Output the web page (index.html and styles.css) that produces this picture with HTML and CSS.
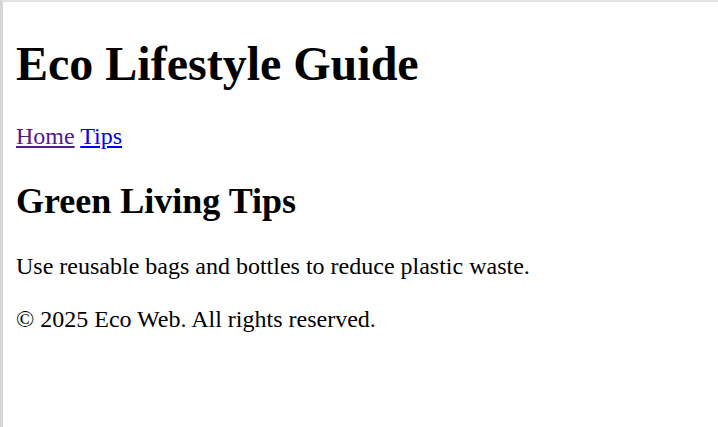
FILE: index.html
```html
<!DOCTYPE html>
<html lang="en">
<head>
<meta charset="utf-8">
<title>Eco Lifestyle Guide</title>
<link rel="stylesheet" href="styles.css">
</head>
<body>
<div class="frame">
  <header>
    <h1 class="title">Eco Lifestyle Guide</h1>
    <nav class="nav"><a class="link visited" href="#">Home</a> <a class="link" href="#tips">Tips</a></nav>
  </header>
  <main>
    <h2 class="subtitle">Green Living Tips</h2>
    <p class="text">Use reusable bags and bottles to reduce plastic waste.</p>
  </main>
  <footer>
    <p class="text">&copy; 2025 Eco Web. All rights reserved.</p>
  </footer>
</div>
</body>
</html>
```
FILE: styles.css
```css
html, body {
  margin: 0;
  padding: 0;
  background: #ffffff;
}
body {
  font-family: "Liberation Serif", "Times New Roman", serif;
  font-size: 24px;
  color: #000000;
}
.frame {
  box-sizing: border-box;
  min-height: 100vh;
  border-top: 2px solid #e2e2e2;
  border-left: 3px solid #d6d6d6;
  padding: 2px 12px 0 13px;
  display: flow-root;
}
.title {
  font-size: 48px;
  font-weight: bold;
  margin: 32.16px 0;
}
.nav {
  margin: 0;
}
.link {
  color: #0000ee;
  text-decoration: underline;
}
.link.visited {
  color: #551a8b;
}
.subtitle {
  font-size: 36px;
  font-weight: bold;
  margin: 29.88px 0 30.88px;
}
.text {
  margin: 26px 0;
}
```
